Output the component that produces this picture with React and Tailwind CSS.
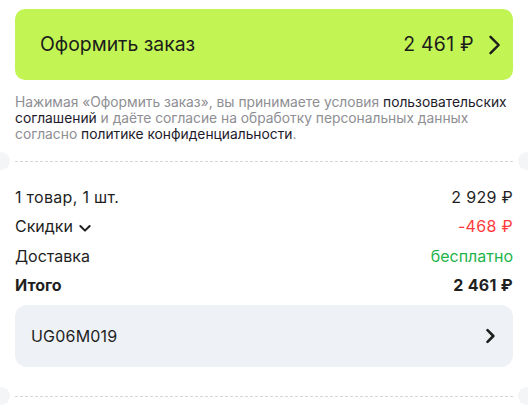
import React from 'react';

function Chevron({ className, strokeWidth = 2 }) {
  return (
    <svg viewBox="0 0 24 24" fill="none" stroke="currentColor" strokeWidth={strokeWidth} strokeLinecap="round" strokeLinejoin="round" className={className}>
      <path d="M9 5l7 7-7 7" />
    </svg>
  );
}

function Divider() {
  return (
    <div className="relative h-px">
      <div className="absolute left-[-23px] top-[-9px] w-[18px] h-[18px] rounded-full bg-[#f4f5f7]" />
      <div className="absolute right-[-23px] top-[-9px] w-[18px] h-[18px] rounded-full bg-[#f4f5f7]" />
      <div className="border-t border-dashed border-[#d4d6da]" />
    </div>
  );
}

export default function App() {
  return (
    <div className="w-[528px] h-[411px] overflow-hidden bg-white px-[15px] pt-[9px] text-[#1f1f1f]" style={{ fontFamily: 'Inter, "Noto Sans", sans-serif' }}>
      {/* Checkout button */}
      <button className="w-full h-[71px] rounded-[10px] bg-[#c2f553] flex items-center pl-[25px] pr-[5px] text-[19.4px] text-[#1c1c1c]">
        <span className="flex-1 text-left">Оформить заказ</span>
        <span className="tracking-[0.3px]">2 461 ₽</span>
        <Chevron className="w-[28px] h-[28px] ml-[6px]" strokeWidth={2.1} />
      </button>

      {/* Disclaimer */}
      <p className="mt-[14px] text-[13.8px] leading-[16px] text-[#8e8e93]">
        Нажимая «Оформить заказ», вы принимаете условия{' '}
        <span className="text-[#1d1a2b]">пользовательских соглашений</span> и даёте согласие на обработку персональных данных согласно{' '}
        <span className="text-[#1d1a2b]">политике конфиденциальности</span>.
      </p>

      <div className="mt-[19px]">
        <Divider />
      </div>

      {/* Summary */}
      <div className="mt-[21px] text-[16px] leading-[29px]">
        <div className="flex justify-between">
          <span className="tracking-[0.3px]">1 товар, 1 шт.</span>
          <span className="tracking-[0.3px]">2 929 ₽</span>
        </div>
        <div className="flex justify-between">
          <span className="flex items-center gap-[4px]">
            Скидки
            <svg viewBox="0 0 24 24" fill="none" stroke="currentColor" strokeWidth={3} strokeLinecap="round" strokeLinejoin="round" className="w-[16px] h-[16px] mt-[2px]">
              <path d="M5 9l7 7 7-7" />
            </svg>
          </span>
          <span className="text-[#ff3b3b] tracking-[0.3px]">-468 ₽</span>
        </div>
        <div className="flex justify-between pt-[1px]">
          <span>Доставка</span>
          <span className="text-[#1eb34b]">бесплатно</span>
        </div>
        <div className="flex justify-between font-bold">
          <span>Итого</span>
          <span className="tracking-[0.3px]">2 461 ₽</span>
        </div>
      </div>

      {/* Promo code */}
      <div className="mt-[5px] h-[62px] rounded-[12px] bg-[#eef1f5] flex items-center justify-between pl-[16px] pr-[13px] text-[16px]">
        <span className="tracking-[0.2px]">UG06M019</span>
        <Chevron className="w-[20px] h-[20px]" strokeWidth={3.2} />
      </div>

      <div className="mt-[29px]">
        <Divider />
      </div>
    </div>
  );
}
